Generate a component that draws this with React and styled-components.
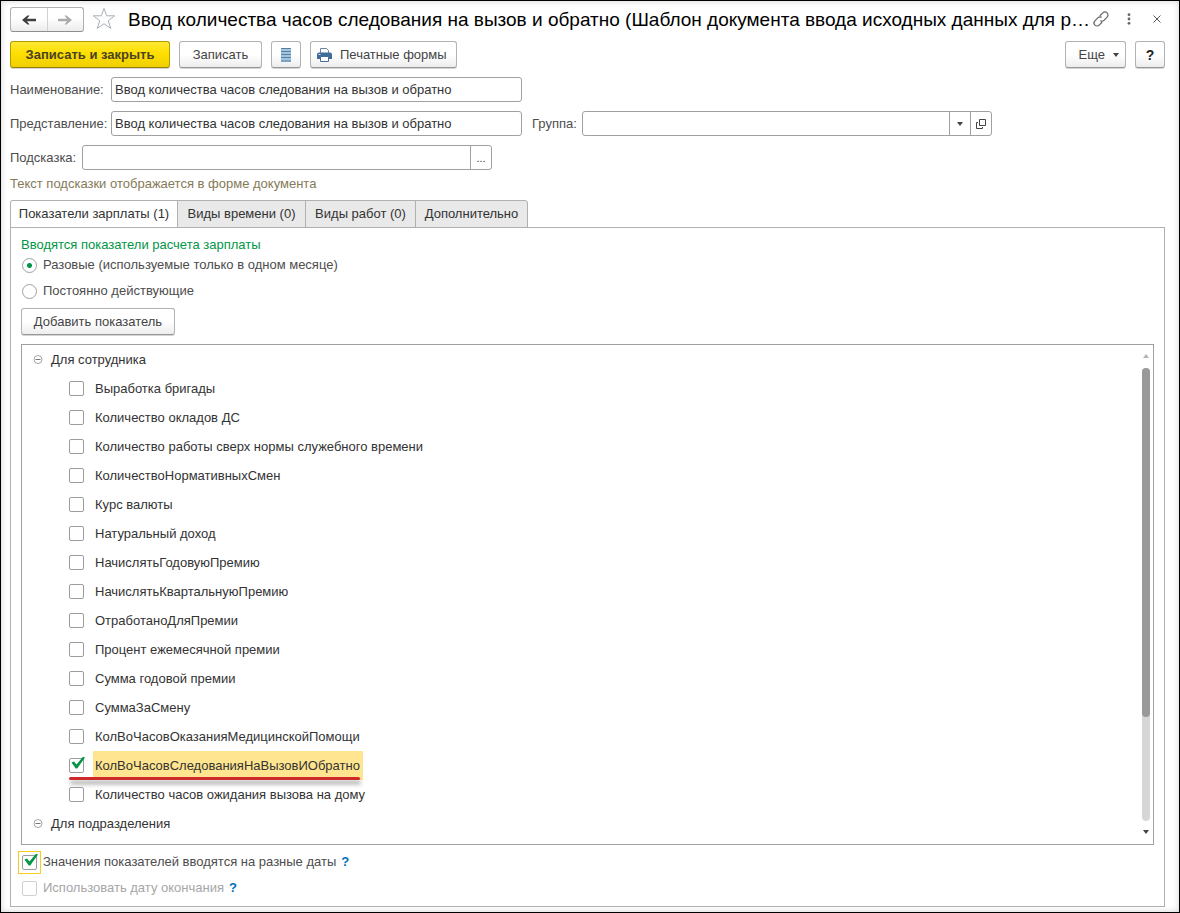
import React from "react";
import styled, { createGlobalStyle, css } from "styled-components";

const Global = createGlobalStyle`
  *, *::before, *::after { box-sizing: border-box; }
  body { margin: 0; background: #fff; }
  body, button, input { font-family: "Liberation Sans", Arial, sans-serif; font-size: 13px; line-height: 16px; color: #333; }
`;

const Window = styled.main`
  min-height: 100vh;
  display: flex;
  flex-direction: column;
  padding: 6px 14px 5px 9px;
  border: 1px solid #000;
  box-shadow: inset 0 0 6px rgba(0, 0, 0, 0.18);
`;

const TitleBar = styled.header`
  display: flex;
  align-items: center;
  height: 25px;
`;

const NavGroup = styled.div`
  display: flex;
  flex: none;
  width: 74px;
  height: 25px;
  border: 1px solid #b0b0b0;
  border-bottom-color: #8f8f8f;
  border-radius: 3px;
  background: linear-gradient(#fff 45%, #ececec);
`;

const NavButton = styled.button`
  flex: 1;
  display: flex;
  align-items: center;
  justify-content: center;
  padding: 0;
  border: 0;
  background: none;
  & + & { border-left: 1px solid #d2d2d2; }
`;

const IconButton = styled.button`
  display: flex;
  flex: none;
  align-items: center;
  justify-content: center;
  width: ${(p) => p.$width}px;
  height: 24px;
  padding: 0 0 2px;
  border: 0;
  background: none;
`;

const Title = styled.h1`
  flex: 1;
  min-width: 0;
  margin: 0 2px 0 5px;
  overflow: hidden;
  white-space: nowrap;
  text-overflow: ellipsis;
  font-size: 19px;
  line-height: 25px;
  font-weight: 400;
  color: #000;
`;

const Toolbar = styled.div`
  display: flex;
  gap: 9px;
  margin: 9px 0;
`;

const Spacer = styled.span`
  flex: 1;
`;

const Button = styled.button`
  display: flex;
  align-items: center;
  justify-content: ${(p) => p.$align || "center"};
  gap: 8px;
  height: 27px;
  min-width: ${(p) => p.$width}px;
  padding: 1px 6px 0;
  border: 1px solid #b3b3b3;
  border-bottom-color: #979797;
  border-radius: 3px;
  background: linear-gradient(#fff 50%, #ededed);
  box-shadow: 0 1px 0 #d4d4d4;
  color: #444;
  white-space: nowrap;
  ${(p) => p.$primary && css`
    border-color: #b39b00;
    border-bottom-color: #978300;
    background: linear-gradient(#ffe836, #ffdf00 45%, #efcf00);
    color: #4a4320;
    font-weight: 700;
  `}
  ${(p) => p.$strong && css`
    color: #222;
    font-size: 14px;
    font-weight: 700;
  `}
`;

const FieldRow = styled.div`
  display: flex;
  align-items: center;
  margin-bottom: 9px;
`;

const Label = styled.label`
  flex: none;
  min-width: ${(p) => p.$width}px;
  margin-left: ${(p) => (p.$second ? 10 : 0)}px;
  color: #4d4d4d;
`;

const FieldBox = styled.div`
  display: flex;
  flex: 0 1 ${(p) => p.$width || 410}px;
  min-width: 0;
  height: 25px;
  border: 1px solid #a0a0a0;
  border-radius: 3px;
  background: #fff;
`;

const TextInput = styled.input`
  flex: 1;
  min-width: 0;
  padding: 0 3px;
  border: 0;
  outline: 0;
  background: transparent;
`;

const FieldButton = styled.button`
  display: flex;
  flex: none;
  align-items: center;
  justify-content: center;
  width: 21px;
  padding: 0;
  border: 0;
  border-left: 1px solid #a0a0a0;
  background: none;
  font-size: 11px;
`;

const Hint = styled.p`
  margin: -6px 0 5px;
  line-height: 22px;
  color: #857a58;
`;

const Tabs = styled.div`
  display: flex;
`;

const Tab = styled.button`
  height: 28px;
  width: ${(p) => p.$width}px;
  margin: 0 0 -1px -1px;
  padding: 0;
  border: 1px solid #b0b0b0;
  background: #e9e9e9;
  white-space: nowrap;
  &:first-child { margin-left: 0; border-top-left-radius: 3px; }
  &:last-child { border-top-right-radius: 3px; }
  &[aria-selected="true"] { background: #fff; border-bottom-color: #fff; }
`;

const Panel = styled.section`
  flex: 1;
  display: flex;
  flex-direction: column;
  padding: 9px 10px 5px;
  border: 1px solid #b0b0b0;
`;

const Options = styled.fieldset`
  margin: 0;
  padding: 0;
  border: 0;
`;

const Legend = styled.legend`
  padding: 0;
  line-height: 16px;
  color: #009646;
`;

const RadioRow = styled.label`
  display: flex;
  align-items: center;
  gap: 6px;
  height: 26px;
  color: #4d4d4d;
`;

const Radio = styled.input`
  appearance: none;
  width: 15px;
  height: 15px;
  margin: 0 0 0 1px;
  border: 1px solid #a0a0a0;
  border-radius: 50%;
  &:checked { background: radial-gradient(circle, #009646 2px, transparent 3px); }
`;

const OptionList = styled.div`
  margin: -1px 0 4px;
`;

const ListBox = styled.div`
  display: flex;
  flex: 1;
  margin: 9px 0 4px;
  border: 1px solid #a0a0a0;
`;

const Tree = styled.ul`
  flex: 1;
  min-width: 0;
  margin: 0;
  padding: 0 0 6px;
  list-style: none;
`;

const GroupRow = styled.li`
  display: flex;
  align-items: center;
  gap: 8px;
  height: 29px;
  padding-left: 11px;
`;

const ItemRow = styled.li`
  display: flex;
  align-items: center;
  height: 29px;
  padding-left: 47px;
`;

const CheckLabel = styled.label`
  position: relative;
  display: flex;
  align-items: center;
  gap: ${(p) => p.$gap || 9}px;
  color: ${(p) => (p.$muted ? "#a6a6a6" : p.$soft ? "#4d4d4d" : "#333")};
`;

const Caption = styled.span`
  padding: 7px 3px 6px 2px;
  background: ${(p) => (p.$marked ? "#ffe58f" : "transparent")};
`;

const Underline = styled.span`
  position: absolute;
  left: 0;
  right: 3px;
  bottom: 0;
  height: 3px;
  border-radius: 2px;
  background: #cf2a2a;
  box-shadow: 1px 4px 4px rgba(0, 0, 0, 0.4);
`;

const Box = styled.span`
  position: relative;
  display: flex;
  flex: none;
  & svg { position: absolute; left: 1px; top: -2px; pointer-events: none; }
`;

const BoxInput = styled.input`
  appearance: none;
  width: 15px;
  height: 15px;
  margin: 0;
  border: 1px solid #9c9c9c;
  border-radius: 2px;
  background: #fff;
  &:disabled { border-color: #cfcfcf; }
`;

const FocusFrame = styled.span`
  display: flex;
  padding: 3px;
  margin-left: -3px;
  border: 1px solid ${(p) => (p.$active ? "#f5cb1c" : "transparent")};
`;

const Scroll = styled.div`
  display: flex;
  flex: none;
  flex-direction: column;
  align-items: center;
  width: 8px;
  margin-right: 3px;
  padding: 9px 0 10px;
`;

const Track = styled.div`
  flex: 1;
  width: 8px;
  margin: 10px 0 9px;
  border-radius: 4px;
  background: #d6d6d6;
`;

const Thumb = styled.div`
  height: 77%;
  border-radius: 4px;
  background: #999;
`;

const FooterRow = styled.div`
  display: flex;
  align-items: center;
  gap: 5px;
  height: 26px;
`;

const HelpLink = styled.a`
  color: #0071bc;
  font-weight: 700;
  text-decoration: none;
`;

const Arrow = ({ color, flip }) => (
  <svg width="14" height="10" viewBox="0 0 14 10" aria-hidden="true">
    <path
      d={flip ? "M0 3.800h9L6.500 0.500h2L14 5l-5.500 4.500h-2L9 6.200H0z" : "M14 3.800H5L7.500 0.500h-2L0 5l5.500 4.500h2L5 6.200h9z"}
      fill={color}
    />
  </svg>
);

const Triangle = ({ up, color = "#444" }) => (
  <svg width="6" height="4" viewBox="0 0 6 4" aria-hidden="true">
    <path d={up ? "M0 4h6L3 0z" : "M0 0h6L3 4z"} fill={color} />
  </svg>
);

const Minus = () => (
  <svg width="10" height="10" viewBox="0 0 10 10" fill="none" stroke="#a5a5a5" aria-hidden="true">
    <circle cx="5" cy="4.500" r="4" />
    <path d="M2.500 4.500h5" stroke="#777" />
  </svg>
);

const Check = ({ muted, checked }) => (
  <Box>
    <BoxInput type="checkbox" defaultChecked={checked} disabled={muted} />
    {checked && (
      <svg width="16" height="15" viewBox="0 0 16 15" aria-hidden="true">
        <path d="M1.500 6.500L4 5.500L6.500 8.500L13 0.800L15 1.500L7.200 12.500H5.800z" fill="#009646" />
      </svg>
    )}
  </Box>
);

const items = [
  "Выработка бригады",
  "Количество окладов ДС",
  "Количество работы сверх нормы служебного времени",
  "КоличествоНормативныхСмен",
  "Курс валюты",
  "Натуральный доход",
  "НачислятьГодовуюПремию",
  "НачислятьКвартальнуюПремию",
  "ОтработаноДляПремии",
  "Процент ежемесячной премии",
  "Сумма годовой премии",
  "СуммаЗаСмену",
  "КолВоЧасовОказанияМедицинскойПомощи",
  "КолВоЧасовСледованияНаВызовИОбратно",
  "Количество часов ожидания вызова на дому",
];
const marked = "КолВоЧасовСледованияНаВызовИОбратно";
const name = "Ввод количества часов следования на вызов и обратно";

export default function App() {
  return (
    <>
      <Global />
      <Window>
        <TitleBar>
          <NavGroup>
            <NavButton aria-label="Назад"><Arrow color="#404040" /></NavButton>
            <NavButton aria-label="Вперед"><Arrow color="#ababab" flip /></NavButton>
          </NavGroup>
          <IconButton $width={39} aria-label="В избранное">
            <svg width="24" height="23" viewBox="0 0 24 23" fill="none" stroke="#aab0b6" aria-hidden="true">
              <path d="M12 1.500l2.700 7.300h8l-6.400 4.800 2.400 7.800L12 16.700l-6.700 4.700 2.400-7.800L1.300 8.800h8z" />
            </svg>
          </IconButton>
          <Title>{name} (Шаблон документа ввода исходных данных для р…</Title>
          <IconButton $width={16} aria-label="Ссылка">
            <svg width="16" height="16" viewBox="0 0 16 16" fill="none" stroke="#666" strokeWidth="1.200" strokeLinecap="round" aria-hidden="true">
              <path d="M7.200 4.500L9.800 1.900a3 3 0 0 1 4.300 4.300L11 9.300a3 3 0 0 1-3.300.6" />
              <path d="M8.800 11.500L6.200 14.100a3 3 0 0 1-4.300-4.300L5 6.700a3 3 0 0 1 3.300-.6" />
            </svg>
          </IconButton>
          <IconButton $width={40} aria-label="Меню">
            <svg width="4" height="12" viewBox="0 0 4 12" fill="#666" aria-hidden="true">
              <circle cx="2" cy="1.700" r="1.400" />
              <circle cx="2" cy="6" r="1.400" />
              <circle cx="2" cy="10.300" r="1.400" />
            </svg>
          </IconButton>
          <IconButton $width={16} aria-label="Закрыть">
            <svg width="8" height="8" viewBox="0 0 8 8" stroke="#555" aria-hidden="true">
              <path d="M0.500 0.500l7 7M7.500 0.500l-7 7" />
            </svg>
          </IconButton>
        </TitleBar>

        <Toolbar>
          <Button $primary $width={160}>Записать и закрыть</Button>
          <Button $width={83}>Записать</Button>
          <Button $width={30} aria-label="Список">
            <svg width="10" height="14" viewBox="0 0 10 14" aria-hidden="true">
              <path d="M0 0h10v14H0z" fill="#a3c4dc" />
              <path d="M0 0.500h10M0 3.500h10M0 6.500h10M0 9.500h10M0 13h10" stroke="#5482a6" />
            </svg>
          </Button>
          <Button $width={147} $align="flex-start">
            <svg width="15" height="14" viewBox="0 0 15 14" aria-hidden="true">
              <path d="M3.500 5V0.500h6l2 2V5" fill="#fff" stroke="#6d8298" />
              <path d="M2 4.500h11a2 2 0 0 1 2 2V11h-3V9H3v2H0V6.500a2 2 0 0 1 2-2z" fill="#3f6c99" />
              <path d="M3.500 8.500h8v5h-8z" fill="#fff" stroke="#4b6d90" />
              <path d="M1.500 6.500h2" stroke="#cfe0ee" />
            </svg>
            Печатные формы
          </Button>
          <Spacer />
          <Button $width={61} $align="flex-end">Еще <Triangle /></Button>
          <Button $strong $width={30} aria-label="Справка">?</Button>
        </Toolbar>

        <FieldRow>
          <Label htmlFor="name" $width={101}>Наименование:</Label>
          <FieldBox $width={411}><TextInput id="name" defaultValue={name} /></FieldBox>
        </FieldRow>
        <FieldRow>
          <Label htmlFor="view" $width={101}>Представление:</Label>
          <FieldBox $width={411}><TextInput id="view" defaultValue={name} /></FieldBox>
          <Label htmlFor="group" $second $width={50}>Группа:</Label>
          <FieldBox>
            <TextInput id="group" />
            <FieldButton aria-label="Выбрать из списка"><Triangle /></FieldButton>
            <FieldButton aria-label="Открыть">
              <svg width="10" height="10" viewBox="0 0 10 10" fill="none" stroke="#444" aria-hidden="true">
                <path d="M3.500 0.500h6v6h-6zM2 3.500H0.500v6h6V8" />
              </svg>
            </FieldButton>
          </FieldBox>
        </FieldRow>
        <FieldRow>
          <Label htmlFor="tip" $width={72}>Подсказка:</Label>
          <FieldBox>
            <TextInput id="tip" />
            <FieldButton aria-label="Изменить">...</FieldButton>
          </FieldBox>
        </FieldRow>
        <Hint>Текст подсказки отображается в форме документа</Hint>

        <Tabs role="tablist">
          <Tab role="tab" aria-selected="true" $width={168}>Показатели зарплаты (1)</Tab>
          <Tab role="tab" aria-selected="false" $width={129}>Виды времени (0)</Tab>
          <Tab role="tab" aria-selected="false" $width={111}>Виды работ (0)</Tab>
          <Tab role="tab" aria-selected="false" $width={113}>Дополнительно</Tab>
        </Tabs>

        <Panel>
          <Options>
            <Legend>Вводятся показатели расчета зарплаты</Legend>
            <OptionList>
              <RadioRow><Radio type="radio" name="kind" defaultChecked />Разовые (используемые только в одном месяце)</RadioRow>
              <RadioRow><Radio type="radio" name="kind" />Постоянно действующие</RadioRow>
            </OptionList>
          </Options>
          <div><Button $width={154}>Добавить показатель</Button></div>

          <ListBox>
            <Tree>
              <GroupRow><Minus />Для сотрудника</GroupRow>
              {items.map((text) => (
                <ItemRow key={text}>
                  <CheckLabel>
                    <Check checked={text === marked} />
                    <Caption $marked={text === marked}>{text}</Caption>
                    {text === marked && <Underline />}
                  </CheckLabel>
                </ItemRow>
              ))}
              <GroupRow><Minus />Для подразделения</GroupRow>
            </Tree>
            <Scroll aria-hidden="true">
              <Triangle up color="#b5b5b5" />
              <Track><Thumb /></Track>
              <Triangle />
            </Scroll>
          </ListBox>

          <FooterRow>
            <CheckLabel $soft $gap={2}>
              <FocusFrame $active><Check checked /></FocusFrame>
              Значения показателей вводятся на разные даты
            </CheckLabel>
            <HelpLink href="#dates">?</HelpLink>
          </FooterRow>
          <FooterRow>
            <CheckLabel $muted $gap={2}>
              <FocusFrame><Check muted /></FocusFrame>
              Использовать дату окончания
            </CheckLabel>
            <HelpLink href="#end">?</HelpLink>
          </FooterRow>
        </Panel>
      </Window>
    </>
  );
}
